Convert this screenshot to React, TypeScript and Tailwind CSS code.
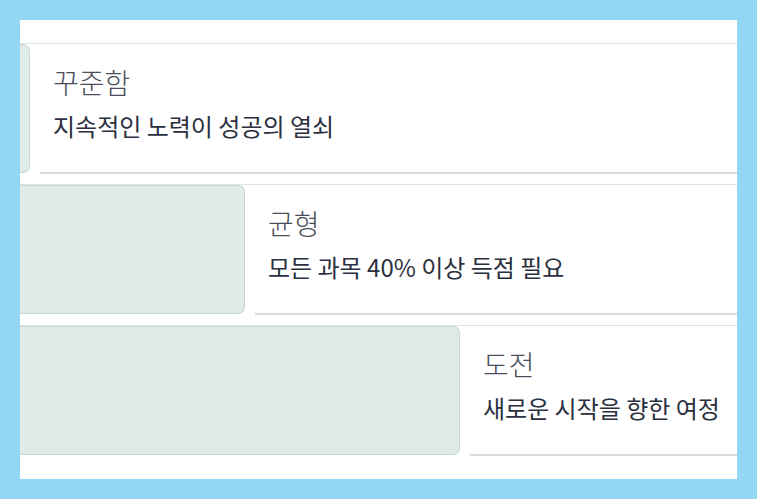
import React from "react";

const rows = [
  { w: "w-[10px]", title: "꾸준함", sub: "지속적인 노력이 성공의 열쇠" },
  { w: "w-[225px]", title: "균형", sub: "모든 과목 40% 이상 득점 필요" },
  { w: "w-[440px]", title: "도전", sub: "새로운 시작을 향한 여정" },
];

export default function App() {
  return (
    <div className="w-[757px] h-[499px] bg-[#94d7f4] p-[20px]" style={{ fontFamily: '"Noto Sans CJK KR", "Noto Sans", sans-serif' }}>
      <div className="w-full h-full bg-white overflow-hidden py-[23px] flex flex-col gap-[10px]">
        {rows.map((r) => (
          <div key={r.title} className="flex items-start border-t border-[#e2e2e2]">
            <div className={`${r.w} h-[129px] shrink-0 bg-[#dfebe9] border border-l-0 border-[#c9d6d4] rounded-r-[7px]`} />
            <div className="flex-1 h-[130px] ml-[10px] border-b-2 border-[#d8dcdc] pl-[13px] pt-[19px]">
              <div className="text-[28px] leading-[38px] text-[#4a4e5a] font-light">{r.title}</div>
              <div className="mt-[9px] text-[24px] leading-[32px] text-[#2b3040] whitespace-nowrap">{r.sub}</div>
            </div>
          </div>
        ))}
      </div>
    </div>
  );
}
